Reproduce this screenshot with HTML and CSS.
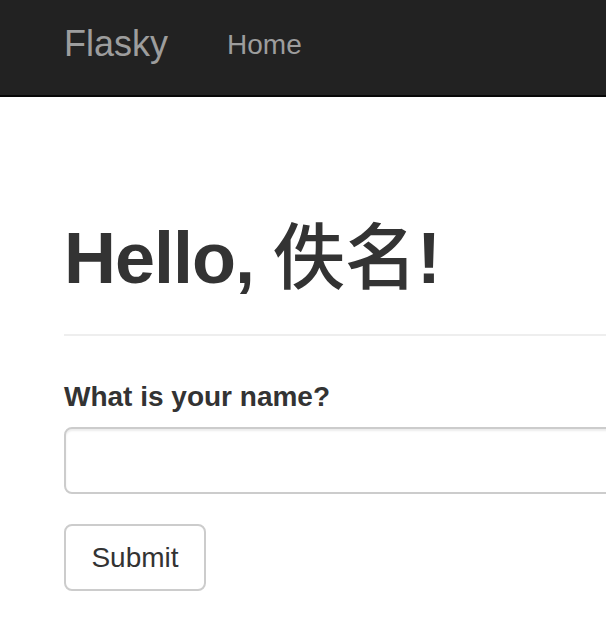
FILE: index.html
```html
<!DOCTYPE html>
<html lang="en">
<head>
<meta charset="utf-8">
<title>Flasky</title>
<link rel="stylesheet" href="styles.css">
</head>
<body>
<div class="page">
  <nav class="navbar">
    <a class="brand" href="#">Flasky</a>
    <a class="nav-link" href="#">Home</a>
  </nav>
  <main class="container">
    <h1 class="title">Hello, <span class="cjk">佚名</span>!</h1>
    <hr class="divider">
    <form class="form">
      <label class="label" for="name">What is your name?</label>
      <input class="input" id="name" type="text">
      <button class="btn" type="button">Submit</button>
    </form>
  </main>
</div>
</body>
</html>
```

FILE: styles.css
```css
html, body {
  margin: 0;
  padding: 0;
  background: #fff;
  overflow: hidden;
}
body {
  font-family: "Liberation Sans", Arial, "Noto Sans CJK SC", sans-serif;
  color: #333;
}
.page {
  width: 606px;
  height: 630px;
  overflow: hidden;
}
.navbar {
  height: 95px;
  background: #222;
  border-bottom: 2px solid #080808;
  display: flex;
  align-items: flex-start;
  padding-left: 64px;
}
.brand {
  font-size: 36px;
  line-height: 1;
  color: #9d9d9d;
  text-decoration: none;
  margin-top: 26px;
}
.nav-link {
  font-size: 28px;
  line-height: 1;
  color: #9d9d9d;
  text-decoration: none;
  margin-top: 31px;
  margin-left: 59px;
}
.container {
  padding-left: 64px;
  margin-right: -40px;
}
.title {
  font-family: "Liberation Sans", Arial, "Noto Sans CJK SC", sans-serif;
  font-size: 72px;
  font-weight: bold;
  letter-spacing: -1px;
  line-height: 1;
  height: 72px;
  margin: 125px 0 0;
  color: #333;
}
.cjk {
  font-family: "Noto Sans CJK SC", sans-serif;
  font-weight: 500;
  letter-spacing: 0;
  line-height: 0;
}
.divider {
  border: 0;
  border-top: 2px solid #eee;
  margin: 40px 0 0;
  height: 0;
}
.form {
  display: flex;
  flex-direction: column;
  align-items: flex-start;
}
.label {
  font-size: 28px;
  font-weight: bold;
  line-height: 1;
  margin-top: 47px;
}
.input {
  box-sizing: border-box;
  width: 100%;
  height: 67px;
  margin-top: 16px;
  border: 2px solid #ccc;
  border-radius: 8px;
  box-shadow: inset 0 2px 2px rgba(0, 0, 0, 0.075);
  font-size: 28px;
  padding: 0 24px;
  font-family: inherit;
  background: #fff;
}
.btn {
  box-sizing: border-box;
  width: 142px;
  height: 67px;
  margin-top: 30px;
  border: 2px solid #ccc;
  border-radius: 8px;
  background: #fff;
  color: #333;
  font-family: inherit;
  font-size: 28px;
  line-height: 1;
  padding: 0;
  display: flex;
  align-items: center;
  justify-content: center;
}
```
